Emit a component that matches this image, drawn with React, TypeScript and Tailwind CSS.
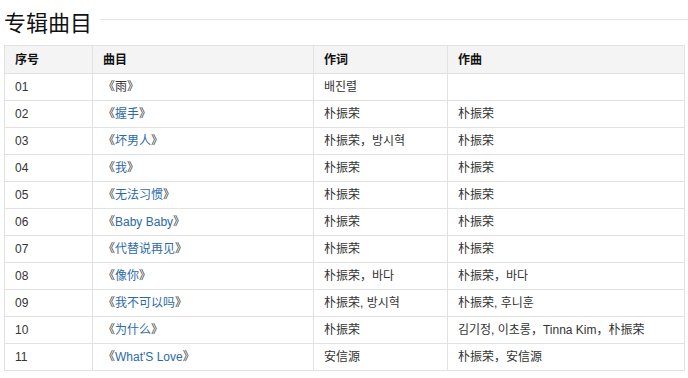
import React from 'react';

type Row = {
  no: string;
  title: string;
  link: boolean;
  lyric: string;
  music: string;
};

const rows: Row[] = [
  { no: '01', title: '雨', link: false, lyric: '배진렬', music: '' },
  { no: '02', title: '握手', link: true, lyric: '朴振荣', music: '朴振荣' },
  { no: '03', title: '坏男人', link: true, lyric: '朴振荣，방시혁', music: '朴振荣' },
  { no: '04', title: '我', link: true, lyric: '朴振荣', music: '朴振荣' },
  { no: '05', title: '无法习惯', link: true, lyric: '朴振荣', music: '朴振荣' },
  { no: '06', title: 'Baby Baby', link: true, lyric: '朴振荣', music: '朴振荣' },
  { no: '07', title: '代替说再见', link: true, lyric: '朴振荣', music: '朴振荣' },
  { no: '08', title: '像你', link: true, lyric: '朴振荣，바다', music: '朴振荣，바다' },
  { no: '09', title: '我不可以吗', link: true, lyric: '朴振荣, 방시혁', music: '朴振荣, 후니훈' },
  { no: '10', title: '为什么', link: true, lyric: '朴振荣', music: '김기정, 이초롱，Tinna Kim，朴振荣' },
  { no: '11', title: "What'S Love", link: true, lyric: '安信源', music: '朴振荣，安信源' },
];

const cell = 'h-[27px] border border-[#e2e2e2] px-[10px] py-0 align-middle';

export default function App() {
  return (
    <div className="w-[688px] h-[378px] bg-white text-[#333] font-['Liberation_Sans','Noto_Sans_CJK_SC',sans-serif]">
      {/* Section heading */}
      <div className="flex items-center pl-1 pt-[7px] h-[34px]">
        <h2 className="text-[22px] leading-[30px] font-normal text-[#111] font-['Noto_Sans_CJK_SC',sans-serif]">
          专辑曲目
        </h2>
        <div className="flex-1 ml-[8px] mt-[-2px] h-px bg-[#e6e6e6]" />
      </div>

      <div className="pl-1 pt-[11px]">
        <table className="table-fixed border-collapse w-[680px] text-[12px] leading-none">
          <colgroup>
            <col className="w-[88px]" />
            <col className="w-[221px]" />
            <col className="w-[134px]" />
            <col className="w-[237px]" />
          </colgroup>
          <thead>
            <tr className="bg-[#f4f4f4]">
              <th className={`${cell} h-[28px] text-left font-bold text-[#111]`}>序号</th>
              <th className={`${cell} h-[28px] text-left font-bold text-[#111]`}>曲目</th>
              <th className={`${cell} h-[28px] text-left font-bold text-[#111]`}>作词</th>
              <th className={`${cell} h-[28px] text-left font-bold text-[#111]`}>作曲</th>
            </tr>
          </thead>
          <tbody>
            {rows.map((r) => (
              <tr key={r.no}>
                <td className={cell}>{r.no}</td>
                <td className={cell}>
                  《
                  <span className={r.link ? 'text-[#2b6aa8]' : ''}>{r.title}</span>
                  》
                </td>
                <td className={cell}>{r.lyric}</td>
                <td className={cell}>{r.music}</td>
              </tr>
            ))}
          </tbody>
        </table>
      </div>
    </div>
  );
}
